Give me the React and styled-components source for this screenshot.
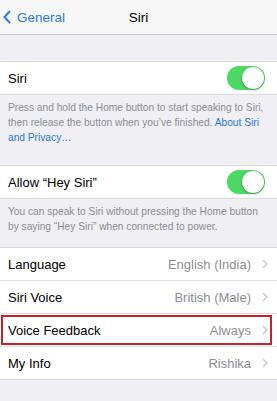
import React from "react";
import styled, { createGlobalStyle } from "styled-components";

const GlobalStyle = createGlobalStyle`
  body {
    margin: 0;
    background: #efeff4;
    font-family: "Liberation Sans", Arial, sans-serif;
  }
`;

const Screen = styled.div`
  width: 277px;
  height: 401px;
  background: #efeff4;
  overflow: hidden;
`;

const NavBar = styled.div`
  height: 35px;
  background: #f7f7f8;
  border-bottom: 1px solid #c8c7cc;
  display: grid;
  grid-template-columns: 1fr auto 1fr;
  align-items: center;
  box-sizing: border-box;
`;

const BackButton = styled.div`
  display: flex;
  align-items: center;
  gap: 6px;
  padding-left: 3px;
  color: #2a7ae2;
  font-size: 13.5px;
`;

const Title = styled.div`
  font-size: 13.5px;
  color: #000;
`;

const Group = styled.div`
  margin-top: ${(p) => p.$gap}px;
  background: #fff;
  border-top: 1px solid #dcdce0;
  border-bottom: 1px solid #dcdce0;
`;

const Row = styled.div`
  height: 32px;
  display: flex;
  align-items: center;
  padding: 0 9px 0 8px;
  position: relative;
  border-top: ${(p) => (p.$first ? "none" : "1px solid #e2e2e6")};
`;

const Label = styled.div`
  flex: 1;
  font-size: 13px;
  color: #000;
`;

const Value = styled.div`
  font-size: 13px;
  color: #8e8e93;
  margin-right: 11px;
`;

const Highlight = styled.div`
  position: absolute;
  left: 1px;
  right: 5px;
  top: 1px;
  bottom: 1px;
  border: 2px solid #c8202c;
  pointer-events: none;
`;

const Switch = styled.div`
  width: 38px;
  height: 24px;
  border-radius: 12px;
  background: #4cd964;
  position: relative;
  margin-right: 3px;
  &::after {
    content: "";
    position: absolute;
    right: 1px;
    top: 1px;
    width: 22px;
    height: 22px;
    border-radius: 50%;
    background: #fff;
    box-shadow: 0 1px 3px rgba(0, 0, 0, 0.3);
  }
`;

const Footer = styled.div`
  padding: 5px 8px 0 8px;
  font-size: 10.2px;
  line-height: 15px;
  color: #8e8e93;
`;

const Link = styled.span`
  color: #2a7ae2;
`;

const Chevron = () => (
  <svg width="6" height="10" viewBox="0 0 6 10">
    <path d="M1 1l4 4-4 4" fill="none" stroke="#c7c7cc" strokeWidth="1.3" />
  </svg>
);

const BackChevron = () => (
  <svg width="8" height="14" viewBox="0 0 8 14">
    <path d="M7 1L1.5 7 7 13" fill="none" stroke="#2a7ae2" strokeWidth="2" />
  </svg>
);

const NavRow = ({ label, value, first, highlight }) => (
  <Row $first={first}>
    <Label>{label}</Label>
    <Value>{value}</Value>
    <Chevron />
    {highlight && <Highlight />}
  </Row>
);

export default function App() {
  return (
    <Screen>
      <GlobalStyle />
      <NavBar>
        <BackButton>
          <BackChevron />
          General
        </BackButton>
        <Title>Siri</Title>
        <div />
      </NavBar>

      <Group $gap={26}>
        <Row $first>
          <Label>Siri</Label>
          <Switch />
        </Row>
      </Group>
      <Footer>
        Press and hold the Home button to start speaking to Siri, then release
        the button when you’ve finished. <Link>About Siri and Privacy…</Link>
      </Footer>

      <Group $gap={20}>
        <Row $first>
          <Label>Allow “Hey Siri”</Label>
          <Switch />
        </Row>
      </Group>
      <Footer>
        You can speak to Siri without pressing the Home button by saying “Hey
        Siri” when connected to power.
      </Footer>

      <Group $gap={13}>
        <NavRow first label="Language" value="English (India)" />
        <NavRow label="Siri Voice" value="British (Male)" />
        <NavRow label="Voice Feedback" value="Always" highlight />
        <NavRow label="My Info" value="Rishika" />
      </Group>
    </Screen>
  );
}
